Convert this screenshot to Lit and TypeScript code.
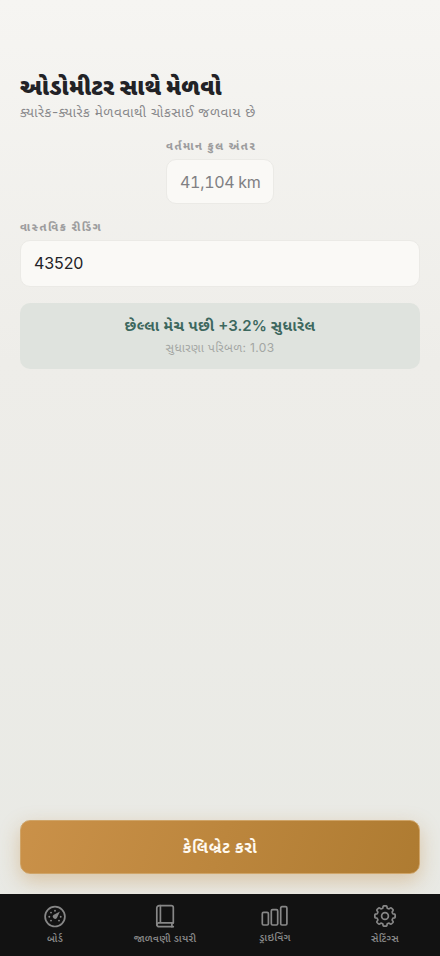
import { LitElement, html, css, svg } from "lit";
import { customElement } from "lit/decorators.js";

/** Outline of an eight-toothed gear centred on (12, 12). */
const gearOutline = (): string => {
  const points: string[] = [];
  for (let i = 0; i < 192; i++) {
    const a = (i / 192) * Math.PI * 2;
    const r = 9.1 + 1.1 * Math.tanh(2.8 * (Math.cos(8 * a) + 0.2));
    points.push(`${(12 + r * Math.sin(a)).toFixed(2)} ${(12 - r * Math.cos(a)).toFixed(2)}`);
  }
  return `M${points.join("L")}Z`;
};

const gaugeDots = [
  [6.3, 12.3], [8, 8.2], [12, 6.4], [17.7, 12.3], [8, 16.2], [16, 16.2],
];

const icons = {
  gauge: svg`
    <circle cx="12" cy="12.6" r="9.9" />
    ${gaugeDots.map(([x, y]) => svg`<circle class="solid" cx=${x} cy=${y + 0.4} r="0.95" />`)}
    <path class="solid" d="M17 7.6 14 13.7a2.2 2.2 0 1 1-3.2-2.9Z" />`,
  book: svg`
    <path d="M20.3 18.8V3.6a2 2 0 0 0-2-2H6.2a2.4 2.4 0 0 0-2.4 2.4v16.4a2.3 2.3 0 0 0 2.3 2.3h14.2" />
    <path d="M3.8 20.8a2 2 0 0 1 2.1-2h14.4M7.4 1.6v17.2M18.9 18.8v3.9" />`,
  bars: svg`
    <rect x="-0.7" y="8.4" width="6.1" height="12.6" rx="1.3" />
    <rect x="8.3" y="5.7" width="6.4" height="15.3" rx="1.3" />
    <rect x="17.7" y="2.7" width="6.2" height="18.3" rx="1.3" />`,
  gear: svg`<path d=${gearOutline()} /><circle cx="12" cy="12" r="3.4" />`,
};

const tabs = [
  { icon: icons.gauge, label: "બોર્ડ", cls: "" },
  { icon: icons.book, label: "જાળવણી ડાયરી", cls: "" },
  { icon: icons.bars, label: "ડ્રાઇવિંગ", cls: "raised" },
  { icon: icons.gear, label: "સેટિંગ્સ", cls: "" },
];

@customElement("app-root")
export class AppRoot extends LitElement {
  static styles = css`
    :host {
      display: flex;
      flex-direction: column;
      height: 956px;
      box-sizing: border-box;
      overflow: hidden;
      font-family: Inter, "Noto Sans Gujarati", "Noto Sans", sans-serif;
      background: linear-gradient(180deg, #f6f5f2 0%, #eeede9 38%, #e8e9e4 100%);
      color: #222226;
    }
    * { box-sizing: border-box; }
    main {
      flex: 1;
      display: flex;
      flex-direction: column;
      padding: 72px 20px 20px;
      white-space: nowrap;
    }
    h1 {
      margin: 0;
      font-size: 22.5px;
      line-height: 30px;
      font-weight: 900;
      letter-spacing: 0.3px;
    }
    .subtitle {
      margin: 0;
      font-size: 13.5px;
      line-height: 20px;
      letter-spacing: 0.5px;
      color: #87878a;
    }
    .current { align-self: center; width: 108px; margin-top: 16px; }
    .label {
      font-size: 11px;
      line-height: 16px;
      font-weight: 800;
      letter-spacing: 1.6px;
      color: #9d9d9e;
    }
    .box {
      display: flex;
      align-items: center;
      margin-top: 5px;
      height: 45px;
      padding: 0 13px;
      border: 1px solid #ebeae6;
      border-radius: 10px;
      background: #faf9f6;
      font-size: 16px;
    }
    .readonly { color: #808083; font-feature-settings: "tnum"; letter-spacing: -0.3px; }
    .actual { margin-top: 15px; }
    .actual .box { height: 47px; padding-bottom: 1px; letter-spacing: -0.1px; }
    .note {
      display: flex;
      flex-direction: column;
      align-items: center;
      height: 66px;
      margin-top: 16px;
      padding-top: 11px;
      border-radius: 10px;
      background: #dfe3de;
    }
    .gain { font-size: 15px; line-height: 23px; font-weight: 700; letter-spacing: 0.4px; color: #3d685e; }
    .gain b { font-weight: 600; letter-spacing: 0; }
    .factor { font-size: 12px; line-height: 21px; letter-spacing: 0.35px; color: #a3a6a3; }
    button {
      display: flex;
      align-items: center;
      justify-content: center;
      height: 54px;
      margin: auto 0 0;
      padding: 0;
      border: 1px solid #cfa468;
      border-radius: 10px;
      background: linear-gradient(110deg, #ca9149, #ae7b31);
      box-shadow: 0 7px 20px rgba(190, 134, 61, 0.38);
      color: #fffaf0;
      font: 700 16px/22px Inter, "Noto Sans Gujarati", "Noto Sans", sans-serif;
      letter-spacing: 0.65px;
    }
    nav {
      display: grid;
      grid-template-columns: repeat(4, 1fr);
      position: relative;
      height: 62px;
      padding-top: 10px;
      background: #121212;
    }
    .tab {
      display: flex;
      flex-direction: column;
      align-items: center;
      color: #878787;
      font-size: 10px;
      line-height: 14px;
      font-weight: 600;
      letter-spacing: 0.3px;
      white-space: nowrap;
    }
    .tab svg {
      width: 24px;
      height: 24px;
      overflow: visible;
      fill: none;
      stroke: currentColor;
      stroke-width: 1.7;
      stroke-linecap: round;
      stroke-linejoin: round;
      margin-bottom: 3px;
    }
    .tab .solid { fill: currentColor; stroke: none; }
    .raised svg { margin-bottom: 2px; }
  `;

  render() {
    return html`
      <main>
        <h1>ઓડોમીટર સાથે મેળવો</h1>
        <p class="subtitle">ક્યારેક-ક્યારેક મેળવવાથી ચોકસાઈ જળવાય છે</p>
        <section class="current">
          <div class="label">વર્તમાન કુલ અંતર</div>
          <div class="box readonly">41,104 km</div>
        </section>
        <section class="actual">
          <div class="label">વાસ્તવિક રીડિંગ</div>
          <div class="box">43520</div>
        </section>
        <section class="note">
          <div class="gain">છેલ્લા મેચ પછી <b>+3.2%</b> સુધારેલ</div>
          <div class="factor">સુધારણા પરિબળ: 1.03</div>
        </section>
        <button>કેલિબ્રેટ કરો</button>
      </main>
      <nav>
        ${tabs.map(
          (t) => html`<div class="tab ${t.cls}">
            <svg viewBox="0 0 24 24">${t.icon}</svg><span>${t.label}</span>
          </div>`,
        )}
      </nav>
    `;
  }
}
